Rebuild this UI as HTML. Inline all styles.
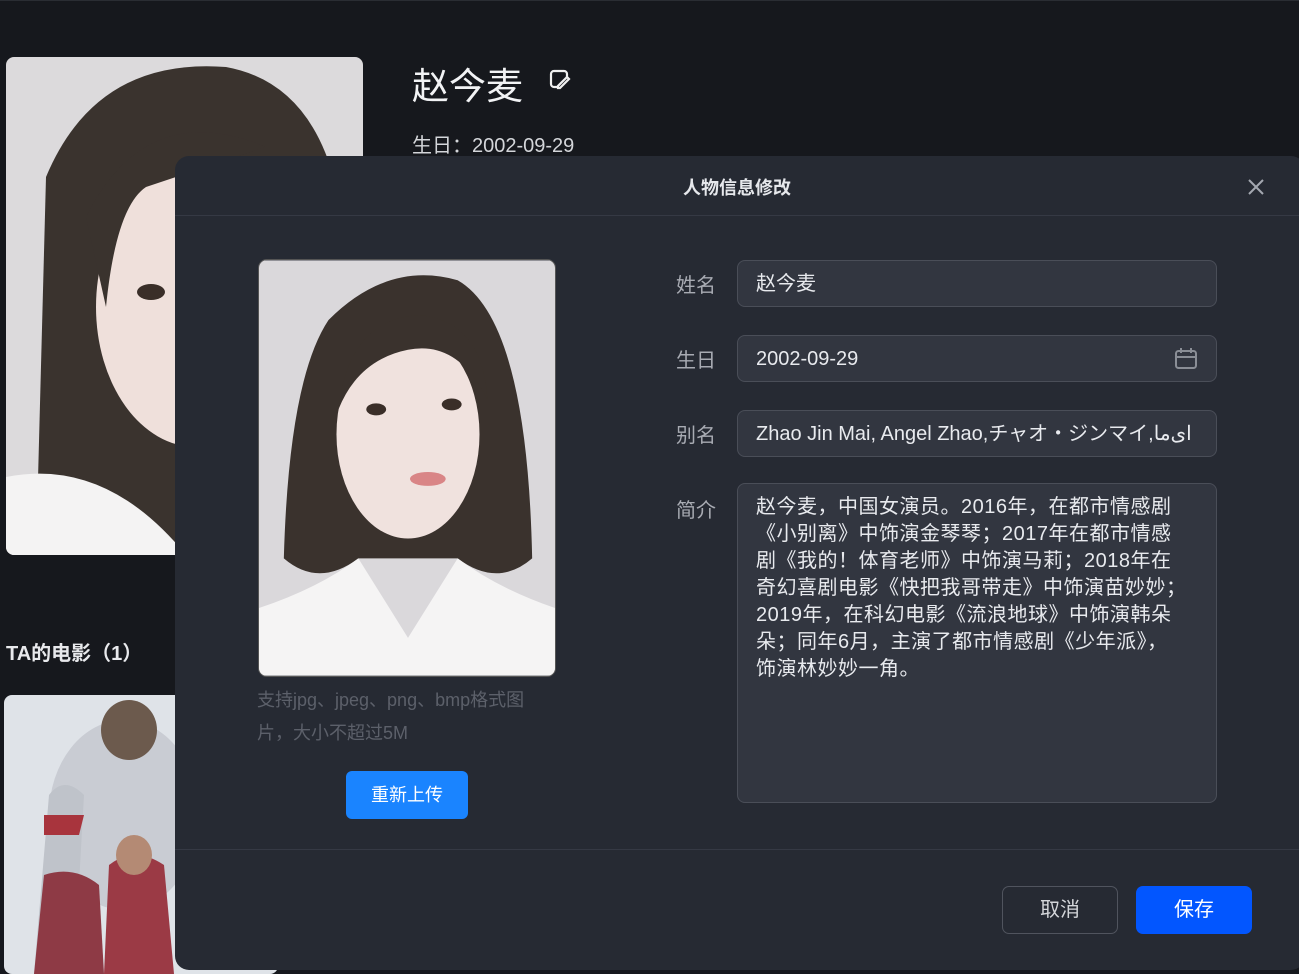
<!DOCTYPE html>
<html><head><meta charset="utf-8"><style>
*{margin:0;padding:0;box-sizing:border-box}
body{width:1299px;height:974px;overflow:hidden;background:#16181d;font-family:"Liberation Sans","Noto Sans CJK SC",sans-serif;position:relative;color:#e6e8ec}
.abs{position:absolute}
.modal{position:absolute;left:175px;top:156px;width:1130px;height:814px;background:#262a33;border-radius:14px;overflow:hidden}
.inp{position:absolute;left:562px;width:480px;background:#323640;border:1px solid #4a4e58;border-radius:8px;font-size:20px;color:#e8eaee;padding-left:18px}
.lbl{position:absolute;left:501px;font-size:20px;color:#a8abb3}
</style></head><body>
<div class="abs" style="left:0;top:0;width:1299px;height:1px;background:#2a2d33"></div>
<svg class="abs" style="left:6px;top:57px;border-radius:8px" width="357" height="498" viewBox="0 0 357 498">
<rect width="357" height="498" fill="#dcdadc"/>
<path d="M30 498 L40 120 Q90 0 220 10 Q330 30 340 200 L340 498Z" fill="#3a332e"/>
<ellipse cx="190" cy="250" rx="100" ry="140" fill="#efe0db"/>
<path d="M80 160 Q140 40 260 90 Q200 110 140 130 Q110 150 100 250 Z" fill="#3a332e"/>
<ellipse cx="145" cy="235" rx="14" ry="8" fill="#3a2e28"/>
<path d="M0 498 L0 420 Q100 400 180 498Z" fill="#f4f3f3"/>
<path d="M180 498 Q260 420 357 420 L357 498Z" fill="#f4f3f3"/>
</svg>
<div class="abs" style="left:412px;top:56px;font-size:37px;color:#f2f3f5">赵今麦</div>
<svg class="abs" style="left:548px;top:68px" width="24" height="24" viewBox="0 0 24 24" fill="none" stroke="#f0f0f0" stroke-width="2.2"><path d="M12 3H6a3 3 0 0 0-3 3v10a3 3 0 0 0 3 3h4"/><path d="M12 3h4a3 3 0 0 1 3 3v3"/><path d="M12 20l9-9-2-2-9 9v2z"/></svg>
<div class="abs" style="left:412px;top:129px;font-size:20px;color:#d4d6da">生日：2002-09-29</div>
<div class="abs" style="left:6px;top:637px;font-size:20px;font-weight:bold;color:#e8e9ec">TA的电影（1）</div>
<svg class="abs" style="left:4px;top:695px;border-radius:8px" width="274" height="279" viewBox="0 0 274 279">
<rect width="274" height="279" fill="#dfe3e8"/>
<ellipse cx="120" cy="120" rx="75" ry="95" fill="#c9ccd3"/>
<ellipse cx="125" cy="35" rx="28" ry="30" fill="#6c5a4d"/>
<path d="M30 279 L45 100 Q60 80 80 100 L70 279Z" fill="#bfc3ca"/>
<path d="M40 120 L80 120 L75 140 L40 140Z" fill="#a8343d"/>
<path d="M100 279 L105 170 Q130 150 160 170 L170 279Z" fill="#9b3a45"/>
<path d="M30 279 L40 180 Q70 170 95 190 L100 279Z" fill="#8e3a45"/>
<ellipse cx="130" cy="160" rx="18" ry="20" fill="#b48a74"/>
</svg>

<div class="modal">
<div class="abs" style="left:0;top:18px;width:1124px;text-align:center;font-size:18px;font-weight:bold;color:#e6e8ec">人物信息修改</div>
<svg class="abs" style="left:1072px;top:22px" width="18" height="18" viewBox="0 0 18 18" stroke="#a4a8b0" stroke-width="2"><path d="M2 2L16 16M16 2L2 16"/></svg>
<div class="abs" style="left:0;top:59px;width:1130px;height:1px;background:#353944"></div>
<svg class="abs" style="left:83px;top:103px;border-radius:9px;border:1px solid #555" width="298" height="418" viewBox="0 0 298 418">
<rect width="298" height="418" fill="#dad8db"/>
<path d="M25 300 Q30 120 70 60 Q130 0 200 20 Q270 60 275 300 Q240 330 200 300 L100 300 Q60 330 25 300Z" fill="#3a322d"/>
<ellipse cx="150" cy="175" rx="72" ry="105" fill="#f0e2de"/>
<path d="M80 150 Q90 60 160 55 Q225 60 230 140 Q200 80 150 90 Q100 100 80 150Z" fill="#3a322d"/>
<ellipse cx="118" cy="150" rx="10" ry="6" fill="#3a2e28"/>
<ellipse cx="194" cy="145" rx="10" ry="6" fill="#3a2e28"/>
<ellipse cx="170" cy="220" rx="18" ry="7" fill="#d98586"/>
<path d="M0 418 L0 350 Q60 330 100 300 L150 380 L200 300 Q240 330 298 350 L298 418Z" fill="#f5f4f4"/>
</svg>
<div class="abs" style="left:82px;top:528px;width:290px;font-size:18px;line-height:33px;color:#5c606a">支持jpg、jpeg、png、bmp格式图片，大小不超过5M</div>
<div class="abs" style="left:171px;top:615px;width:122px;height:48px;background:#1a84ff;border-radius:6px;color:#fff;font-size:18px;text-align:center;line-height:48px">重新上传</div>

<div class="lbl" style="top:113px">姓名</div>
<div class="inp" style="top:104px;height:47px;line-height:47px">赵今麦</div>
<div class="lbl" style="top:188px">生日</div>
<div class="inp" style="top:179px;height:47px;line-height:47px">2002-09-29</div>
<svg class="abs" style="left:999px;top:191px" width="24" height="24" viewBox="0 0 24 24" fill="none" stroke="#8a8e96" stroke-width="2"><rect x="2" y="4" width="20" height="17" rx="2.5"/><path d="M2 10h20M7 1v5M17 1v5"/></svg>
<div class="lbl" style="top:263px">别名</div>
<div class="inp" style="top:254px;height:47px;line-height:47px;white-space:nowrap;overflow:hidden">Zhao Jin Mai, Angel Zhao,チャオ・ジンマイ,ای‌ما</div>
<div class="lbl" style="top:338px">简介</div>
<div class="inp" style="top:327px;height:320px;padding-top:10px;padding-right:0;line-height:27px;font-size:20px;letter-spacing:0.5px;white-space:nowrap;overflow:hidden">赵今麦，中国女演员。2016年，在都市情感剧<br>《小别离》中饰演金琴琴；2017年在都市情感<br>剧《我的！体育老师》中饰演马莉；2018年在<br>奇幻喜剧电影《快把我哥带走》中饰演苗妙妙；<br>2019年，在科幻电影《流浪地球》中饰演韩朵<br>朵；同年6月，主演了都市情感剧《少年派》，<br>饰演林妙妙一角。</div>

<div class="abs" style="left:0;top:693px;width:1130px;height:1px;background:#353944"></div>
<div class="abs" style="left:827px;top:730px;width:116px;height:48px;border:1px solid #50545e;border-radius:7px;color:#d4d6da;font-size:20px;text-align:center;line-height:46px">取消</div>
<div class="abs" style="left:961px;top:730px;width:116px;height:48px;background:#0256ff;border-radius:7px;color:#fff;font-size:20px;text-align:center;line-height:48px">保存</div>
</div>
</body></html>
